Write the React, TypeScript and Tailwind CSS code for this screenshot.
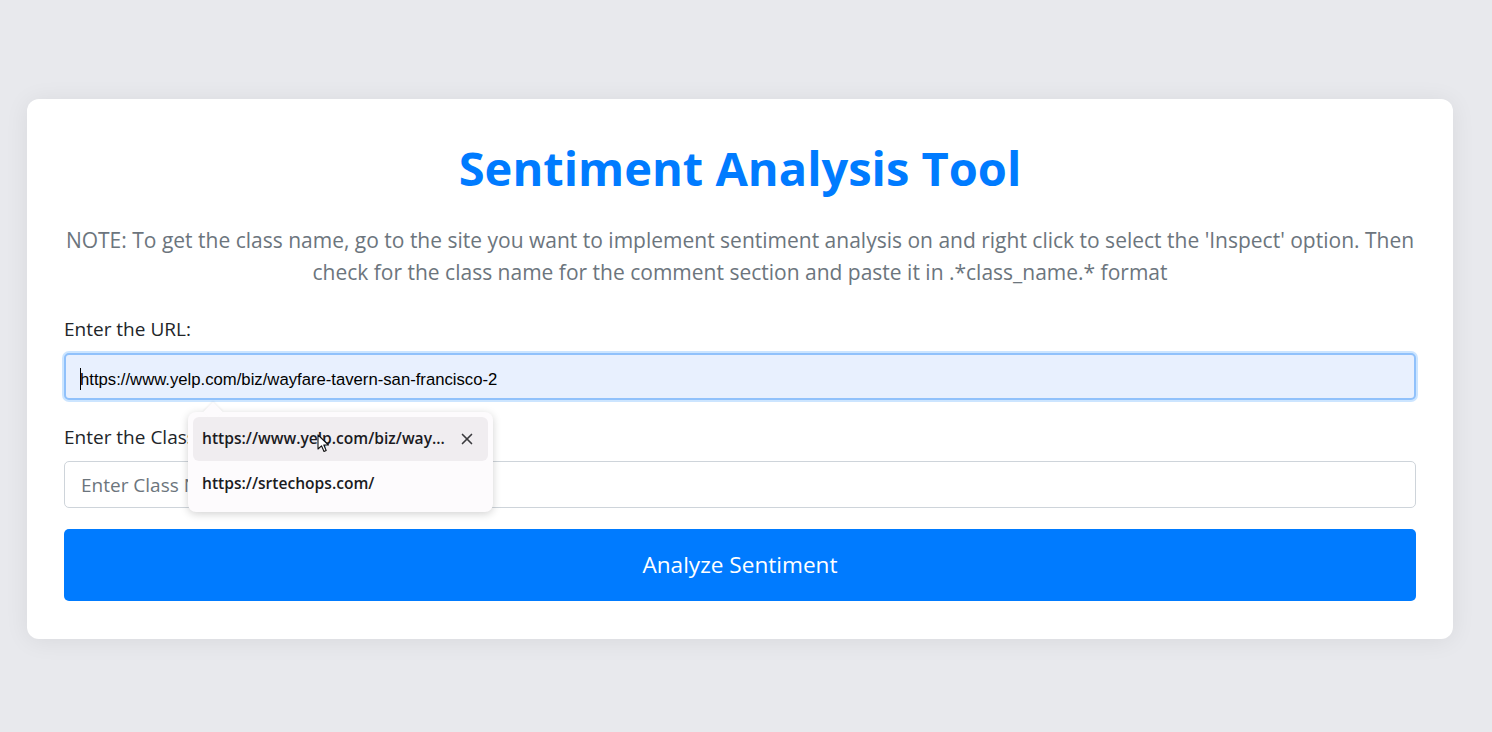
import { X } from "lucide-react";

const ui = "font-['Open_Sans','Noto_Sans',sans-serif]";

function Pointer() {
  return (
    <svg className="absolute left-[124px] top-[17px]" width="14" height="20" viewBox="0 0 14 20">
      <path d="M1 1 L1 15 L4.5 11.8 L7 17.5 L9.2 16.5 L6.8 11 L11.5 11 Z" fill="#fff" stroke="#111" strokeWidth="1.1" strokeLinejoin="round" />
    </svg>
  );
}

export default function App() {
  return (
    <div className={`h-[732px] bg-[#e8e9ed] pl-[27px] pr-[39px] pt-[99px] ${ui}`}>
      <div className="rounded-xl bg-white px-[37px] pt-[40px] pb-[38px] shadow-[0_2px_24px_rgba(0,0,0,0.07)]">
        <h1 className="text-center text-[47px] font-bold leading-[58px] text-[#007bff]">Sentiment Analysis Tool</h1>
        <p className="mt-[27px] text-center text-[21px] leading-[32px] text-[#6c757d]">
          NOTE: To get the class name, go to the site you want to implement sentiment analysis on and right click to select the 'Inspect' option. Then check for the class name for the comment section and paste it in .*class_name.* format
        </p>

        <label className="mt-[27px] block text-[19px] leading-[28px] text-[#212529]">Enter the URL:</label>
        <div className="relative mt-[10px]">
          <div className="relative flex h-[47px] items-center rounded-[5px] border-2 border-[#90c1fb] bg-[#e8f0fe] pl-[14px] pt-[6px] shadow-[0_0_0_2px_rgba(0,123,255,0.2)]">
            <span className="absolute left-[14px] top-[13px] h-[22px] w-px bg-black" />
            <span className="font-['Liberation_Sans',Arial,sans-serif] text-[16.7px] text-black">https://www.yelp.com/biz/wayfare-tavern-san-francisco-2</span>
          </div>

          <div className="absolute left-[124px] top-[59px] z-10 w-[305px] rounded-lg bg-[#fdfbfd] p-[5px] shadow-[0_2px_8px_rgba(0,0,0,0.18)]">
            <div className="absolute -top-[7px] left-[18px] h-[14px] w-[14px] rotate-45 bg-[#fdfbfd] shadow-[-1px_-1px_2px_rgba(0,0,0,0.06)]" />
            <div className="relative flex h-[44px] items-center justify-between rounded-md bg-[#f0edf0] pl-[9px] pr-[12px]">
              <span className="text-[15.6px] font-semibold text-[#1b1b1f]">https://www.yelp.com/biz/way...</span>
              <X size={18} strokeWidth={2.2} className="text-[#3a3a3e]" />
              <Pointer />
            </div>
            <div className="flex h-[46px] items-center pl-[9px]">
              <span className="text-[15.6px] font-semibold text-[#1b1b1f]">https://srtechops.com/</span>
            </div>
          </div>
        </div>

        <label className="mt-[23px] block text-[19px] leading-[28px] text-[#212529]">Enter the Class Name:</label>
        <input
          className="mt-[10px] block h-[47px] w-full rounded-[5px] border border-[#ced4da] px-[16px] text-[19px] text-[#495057] placeholder:text-[#6c757d] outline-none"
          placeholder="Enter Class Name"
        />

        <button className="mt-[21px] h-[72px] w-full rounded-[5px] bg-[#007bff] text-[22.6px] text-white">Analyze Sentiment</button>
      </div>
    </div>
  );
}
